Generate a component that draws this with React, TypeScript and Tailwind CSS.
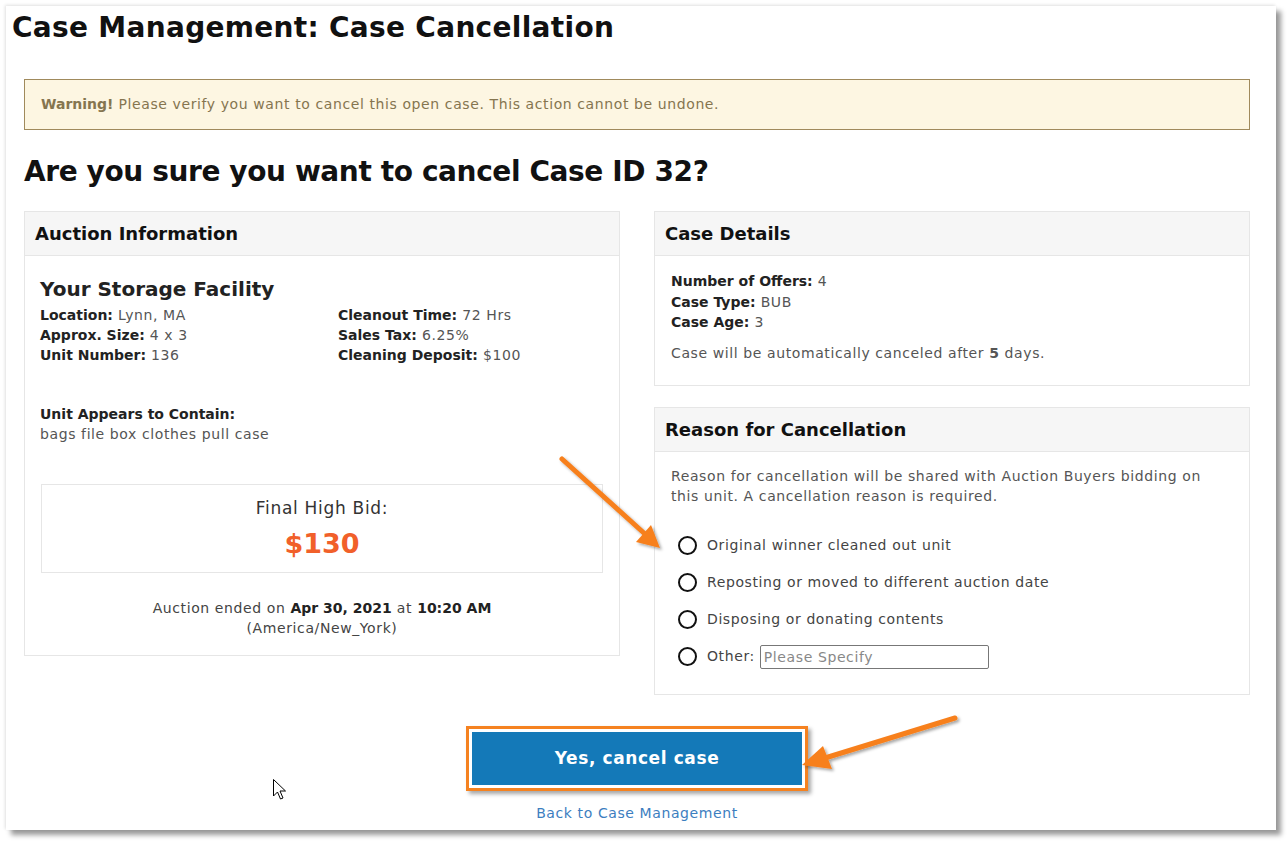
import React from "react"

const Field = ({ label, value }: { label: string; value: string }) => (
  <div>
    <span className="font-bold tracking-normal text-[#222]">{label}</span>{" "}
    <span className="text-[#555]">{value}</span>
  </div>
)

const Card = ({
  title,
  className,
  children,
}: {
  title: string
  className?: string
  children: React.ReactNode
}) => (
  <div className={`border border-[#e6e6e6] bg-white ${className ?? ""}`}>
    <div className="flex h-[44px] items-center border-b border-[#e6e6e6] bg-[#f6f6f6] px-[10px] text-[18px] font-semibold tracking-normal text-[#111]">
      {title}
    </div>
    {children}
  </div>
)

const reasons = [
  "Original winner cleaned out unit",
  "Reposting or moved to different auction date",
  "Disposing or donating contents",
]

const Radio = () => (
  <span className="h-[19px] w-[19px] shrink-0 rounded-full border-[2.5px] border-[#111] bg-white" />
)

export default function App() {
  return (
    <div className="relative min-h-screen bg-white font-['DejaVu_Sans',sans-serif] text-[14px] tracking-[0.6px] text-[#333]">
      <div className="ml-[6px] mt-[6px] h-[824px] w-[1270px] bg-white shadow-[5px_5px_5px_rgba(0,0,0,0.4),-1px_-1px_3px_rgba(0,0,0,0.12)]">
        <h1 className="px-[6px] pt-[4px] text-[28px] font-semibold leading-[36px] tracking-[0.3px] text-[#111]">
          Case Management: Case Cancellation
        </h1>

        <div className="w-[1262px] px-[18px]">
          <div className="mt-[33px] flex h-[51px] items-center border border-[#a08a5c] bg-[#fdf6e2] px-[16px] text-[#85754f]">
            <span className="font-bold tracking-normal">Warning!</span>
            <span>&nbsp;Please verify you want to cancel this open case. This action cannot be undone.</span>
          </div>

          <h2 className="mt-[22px] text-[28px] font-semibold leading-[40px] tracking-[-0.4px] text-[#111]">
            Are you sure you want to cancel Case ID 32?
          </h2>

          <div className="mt-[19px] grid grid-cols-2 items-start gap-[34px]">
            <Card title="Auction Information" className="pb-[17px]">
              <div className="px-[15px] pt-[19px]">
                <h3 className="text-[20px] font-semibold leading-[28px] tracking-normal text-[#222]">
                  Your Storage Facility
                </h3>
                <div className="mt-[2px] grid grid-cols-[298px_1fr] leading-[20px]">
                  <div>
                    <Field label="Location:" value="Lynn, MA" />
                    <Field label="Approx. Size:" value="4 x 3" />
                    <Field label="Unit Number:" value="136" />
                  </div>
                  <div>
                    <Field label="Cleanout Time:" value="72 Hrs" />
                    <Field label="Sales Tax:" value="6.25%" />
                    <Field label="Cleaning Deposit:" value="$100" />
                  </div>
                </div>
                <div className="mt-[39px] leading-[20px]">
                  <div className="font-bold tracking-normal text-[#222]">Unit Appears to Contain:</div>
                  <div className="text-[#555]">bags file box clothes pull case</div>
                </div>
              </div>
              <div className="mx-[16px] mt-[40px] flex h-[89px] flex-col items-center border border-[#e6e6e6] pt-[11px]">
                <div className="text-[17px] leading-[24px] tracking-[0.7px] text-[#333]">Final High Bid:</div>
                <div className="mt-[6px] text-[27px] font-bold leading-[36px] tracking-normal text-[#f1602a]">$130</div>
              </div>
              <div className="mt-[25px] text-center leading-[20px] text-[#444]">
                <div>
                  Auction ended on <span className="font-bold tracking-normal text-[#222]">Apr 30, 2021</span> at{" "}
                  <span className="font-bold tracking-normal text-[#222]">10:20 AM</span>
                </div>
                <div>(America/New_York)</div>
              </div>
            </Card>

            <div className="flex flex-col gap-[21px]">
              <Card title="Case Details" className="pb-[22px]">
                <div className="px-[16px] pt-[15px] leading-[20.5px]">
                  <Field label="Number of Offers:" value="4" />
                  <Field label="Case Type:" value="BUB" />
                  <Field label="Case Age:" value="3" />
                  <div className="mt-[10px] text-[#555]">
                    Case will be automatically canceled after <span className="font-bold">5</span> days.
                  </div>
                </div>
              </Card>

              <Card title="Reason for Cancellation" className="pb-[19px]">
                <div className="px-[16px] pt-[14px]">
                  <p className="leading-[20px] text-[#555]">
                    Reason for cancellation will be shared with Auction Buyers bidding on this unit. A
                    cancellation reason is required.
                  </p>
                  <div className="mt-[21px] pl-[7px]">
                    {reasons.map((r) => (
                      <label key={r} className="flex h-[37px] items-center gap-[10px] text-[#444]">
                        <Radio />
                        <span>{r}</span>
                      </label>
                    ))}
                    <label className="flex h-[37px] items-center gap-[10px] text-[#444]">
                      <Radio />
                      <span>Other:</span>
                      <input
                        placeholder="Please Specify"
                        className="-ml-[5px] h-[24px] w-[229px] rounded-[2px] border border-[#777] px-[3px] text-[14px] tracking-[0.6px] placeholder:text-[#888]"
                      />
                    </label>
                  </div>
                </div>
              </Card>
            </div>
          </div>

          <div className="mt-[31px] flex flex-col items-center">
            <div className="border-[3px] border-[#f58220] bg-white p-[3px] shadow-[3px_3px_4px_rgba(0,0,0,0.35)]">
              <button className="h-[53px] w-[330px] bg-[#1479b8] text-[17px] font-bold tracking-[0.6px] text-white">
                Yes, cancel case
              </button>
            </div>
            <a className="mt-[12px] leading-[20px] text-[#3c7ebf]" href="#">
              Back to Case Management
            </a>
          </div>
        </div>
      </div>

      {/* annotation overlay: arrows and cursor */}
      <svg className="pointer-events-none absolute left-0 top-0" width="1288" height="842">
        <defs>
          <filter id="sh" x="-20%" y="-20%" width="140%" height="140%">
            <feDropShadow dx="2" dy="2" stdDeviation="1.5" floodOpacity="0.35" />
          </filter>
        </defs>
        <g fill="#f7801e" stroke="#f7801e" filter="url(#sh)">
          <line x1="562" y1="453" x2="645" y2="528" strokeWidth="5" strokeLinecap="round" />
          <polygon points="660,542 636,536 651,519" stroke="none" />
          <line x1="955" y1="712" x2="825" y2="752" strokeWidth="5" strokeLinecap="round" />
          <polygon points="802,759 823,740 832,763" stroke="none" />
        </g>
        <path
          d="M273.5 773.5 L273.5 790 L277.5 786 L280.5 793 L283 792 L280 785 L285.5 785 Z"
          fill="#fff"
          stroke="#000"
          strokeWidth="1"
          strokeLinejoin="round"
        />
      </svg>
    </div>
  )
}
